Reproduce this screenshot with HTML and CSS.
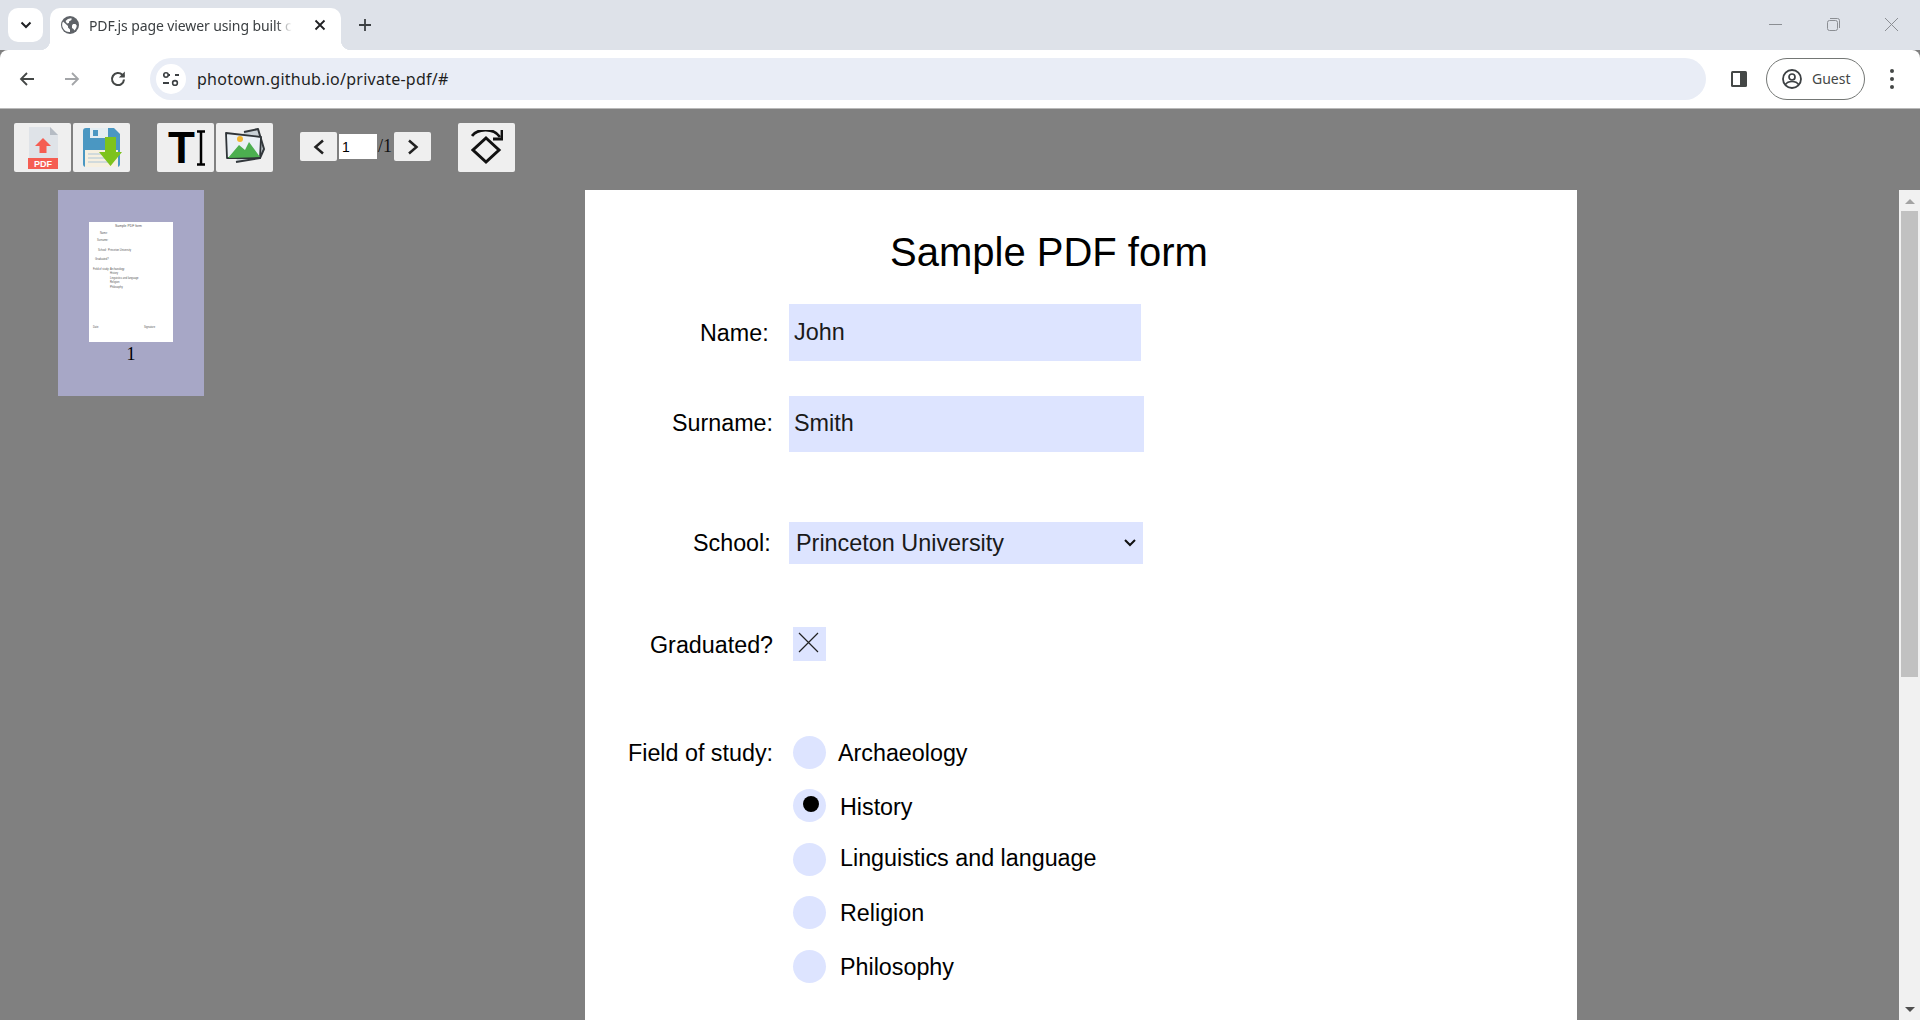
FILE: index.html
```html
<!DOCTYPE html>
<html lang="en">
<head>
    <meta charset="UTF-8">
    <title>PDF.js page viewer using builtCSS</title>
    <link rel="stylesheet" href="styles.css">
</head>
<body>

    <!-- browser chrome -->
    <header class="tabstrip">
        <button class="tab-search">
            <svg width="14" height="14" viewBox="0 0 14 14"><path d="M2.5 4.5 7 9l4.5-4.5" fill="none" stroke="#202124" stroke-width="2"/></svg>
        </button>
        <div class="tab">
            <svg class="favicon" width="18" height="18" viewBox="0 0 18 18">
                <circle cx="9" cy="9" r="9" fill="#5f6368"/>
                <path d="M2 5.5 7 10v1.5l2 2V16a7.2 7.2 0 0 1-7-10.500zM10.500 2.200V4L8 5.500V7l-2 .5L4.500 5A7 7 0 0 1 10.500 2.200zM12 8h2.500l1.300 1.800a7 7 0 0 1-2.300 4.700L12.500 13l-1.500-1V9.500z" fill="#fff"/>
            </svg>
            <span class="tab-title">PDF.js page viewer using built c</span>
            <svg class="tab-close" width="12" height="12" viewBox="0 0 12 12"><path d="M1.500 1.500l9 9M10.500 1.500l-9 9" stroke="#202124" stroke-width="1.800"/></svg>
        </div>
        <svg class="new-tab" width="14" height="14" viewBox="0 0 14 14"><path d="M7 1v12M1 7h12" stroke="#3c4043" stroke-width="1.800"/></svg>
        <div class="window-controls">
            <svg width="13" height="13" viewBox="0 0 13 13"><path d="M0 6.500h13" stroke="#8b8e93"/></svg>
            <svg width="13" height="13" viewBox="0 0 13 13"><rect x=".5" y="2.500" width="10" height="10" rx="2" fill="none" stroke="#8b8e93"/><path d="M3 .5h7.500a2 2 0 0 1 2 2V10" fill="none" stroke="#8b8e93"/></svg>
            <svg width="13" height="13" viewBox="0 0 13 13"><path d="M0 0l13 13M13 0 0 13" stroke="#8b8e93"/></svg>
        </div>
    </header>

    <nav class="addressbar">
        <svg class="nav-icon" width="16" height="16" viewBox="0 0 16 16"><path d="M15 8H2M8 2 2 8l6 6" fill="none" stroke="#444746" stroke-width="1.800"/></svg>
        <svg class="nav-icon" width="16" height="16" viewBox="0 0 16 16"><path d="M1 8h13M8 2l6 6-6 6" fill="none" stroke="#a3a5a8" stroke-width="1.800"/></svg>
        <svg class="nav-icon" width="18" height="18" viewBox="0 0 18 18"><path d="M15 9.500A6 6 0 1 1 13.300 4.800L15 6.500" fill="none" stroke="#444746" stroke-width="2.100"/><path d="M15.800 1.500V7.500H9.800z" fill="#444746"/></svg>
        <div class="omnibox">
            <span class="site-info">
                <svg width="16" height="14" viewBox="0 0 16 14">
                    <path d="M0 3h7M0 11h6M12 3h4" stroke="#3c4043" stroke-width="1.800"/>
                    <circle cx="3" cy="3" r="2.200" fill="#fff" stroke="#3c4043" stroke-width="1.600"/>
                    <circle cx="12" cy="11" r="2.400" fill="#fff" stroke="#3c4043" stroke-width="1.600"/>
                </svg>
            </span>
            <span class="url">photown.github.io/private-pdf/#</span>
        </div>
        <svg class="side-panel" width="18" height="18" viewBox="0 0 18 18"><rect x="1" y="1" width="16" height="16" rx="1.500" fill="#444746"/><rect x="3" y="3" width="7" height="12" fill="#fff"/></svg>
        <div class="guest-chip">
            <svg width="20" height="20" viewBox="0 0 20 20">
                <circle cx="10" cy="10" r="9" fill="none" stroke="#3c4043" stroke-width="1.800"/>
                <circle cx="10" cy="8" r="3" fill="none" stroke="#3c4043" stroke-width="1.700"/>
                <path d="M3.500 15.500c1.500-2.500 4-3 6.500-3s5 .5 6.500 3" fill="none" stroke="#3c4043" stroke-width="1.700"/>
            </svg>
            <span>Guest</span>
        </div>
        <div class="menu-dots"><i></i><i></i><i></i></div>
    </nav>

    <!-- the app -->
    <section class="app-toolbar">
        <button class="tool">
            <svg width="34" height="42" viewBox="0 0 34 42">
                <path d="M3 0h21l8 8v32H3z" fill="#dfe3e8"/>
                <path d="M24 0v8h8z" fill="#b6bcc4"/>
                <path d="M17 11l8 8h-4.500v7h-7v-7H9z" fill="#f55d52"/>
                <rect x="2" y="31" width="30" height="11" fill="#f55d52"/>
                <text x="17" y="40" class="pdf-tag">PDF</text>
            </svg>
        </button>
        <button class="tool">
            <svg width="40" height="40" viewBox="0 0 40 40">
                <path d="M1 3a3 3 0 0 1 3-3h28l6 6v30a3 3 0 0 1-3 3H4a3 3 0 0 1-3-3z" fill="#4a97c2"/>
                <rect x="8" y="0" width="18" height="10" fill="#e3edf2"/>
                <rect x="11" y="2" width="5" height="6" fill="#4a97c2"/>
                <rect x="3" y="22" width="33" height="17" fill="#f6efe0"/>
                <path d="M6 26h20M6 30h20M6 34h20" stroke="#c5d3da" stroke-width="1.300"/>
                <path d="M23 9h11v15h6L28.500 38 17 24h6z" fill="#7dc31c"/>
            </svg>
        </button>
        <button class="tool tool-gap tool-text">
            <span class="type-t">T</span>
            <svg width="10" height="36" viewBox="0 0 10 36">
                <path d="M5 1v34M1 1.500h8M1 34.500h8" fill="none" stroke="#000" stroke-width="2.500"/>
            </svg>
        </button>
        <button class="tool">
            <svg width="48" height="40" viewBox="6 5 48 40">
                <path d="M29 9 43 6l6 20-4 9-24 4" fill="#c9d1d6" stroke="#33383c" stroke-width="2" stroke-linejoin="round"/>
                <path d="M11 10 46 14 45 35 12 35z" fill="#eaf0f5" stroke="#2f3438" stroke-width="1.800" stroke-linejoin="round"/>
                <path d="M13 35 24 22l6 5 4-8 11 15z" fill="#4caf50"/>
                <circle cx="25" cy="16" r="3" fill="#f2b632"/>
            </svg>
        </button>
        <div class="pager">
            <button class="page-btn">
                <svg width="14" height="16" viewBox="0 0 14 16"><path d="M11 1.500 3.500 8l7.500 6.500" fill="none" stroke="#222" stroke-width="2.500"/></svg>
            </button>
            <input class="page-input" type="text" value="1">
            <span class="page-total">/1</span>
            <button class="page-btn">
                <svg width="14" height="16" viewBox="0 0 14 16"><path d="M3 1.500 10.500 8 3 14.500" fill="none" stroke="#222" stroke-width="2.500"/></svg>
            </button>
        </div>
        <button class="tool tool-rotate">
            <svg width="32" height="36" viewBox="0 2 32 36">
                <path d="M1 8C6 1 22-1 29 9" fill="none" stroke="#111" stroke-width="2.800"/>
                <path d="M31 2v9h-9" fill="none" stroke="#111" stroke-width="2.800"/>
                <path d="M15 10 28 22 15 34 2 22z" fill="none" stroke="#111" stroke-width="3"/>
            </svg>
        </button>
    </section>

    <main class="workspace">
        <aside class="thumbs">
            <div class="thumb-card">
                <div class="thumb-page">
                    <span class="mini mini-title">Sample PDF form</span>
                    <span class="mini mini-name">Name:</span>
                    <span class="mini mini-surname">Surname:</span>
                    <span class="mini mini-school">School: &nbsp;Princeton University</span>
                    <span class="mini mini-grad">Graduated?</span>
                    <span class="mini mini-field">Field of study:</span>
                    <span class="mini mini-r1">Archaeology</span>
                    <span class="mini mini-r2">History</span>
                    <span class="mini mini-r3">Linguistics and language</span>
                    <span class="mini mini-r4">Religion</span>
                    <span class="mini mini-r5">Philosophy</span>
                    <span class="mini mini-date">Date</span>
                    <span class="mini mini-sign">Signature</span>
                </div>
                <span class="thumb-num">1</span>
            </div>
        </aside>

        <!-- pdf page is a free canvas, fields sit where the pdf puts them -->
        <article class="pdf-page">
            <h1 class="pdf-title">Sample PDF form</h1>

            <label class="pdf-label lbl-name">Name:</label>
            <input class="pdf-field field-name" type="text" value="John">

            <label class="pdf-label lbl-surname">Surname:</label>
            <input class="pdf-field field-surname" type="text" value="Smith">

            <label class="pdf-label lbl-school">School:</label>
            <select class="pdf-field field-school">
                <option>Princeton University</option>
            </select>

            <label class="pdf-label lbl-grad">Graduated?</label>
            <div class="field-check">
                <svg width="24" height="24" viewBox="0 0 24 24"><path d="M3 3l19 19M22 3 3 22" stroke="#222" stroke-width="1.200"/></svg>
            </div>

            <label class="pdf-label lbl-field">Field of study:</label>

            <span class="radio radio-1"></span>
            <span class="pdf-label opt-1">Archaeology</span>
            <span class="radio radio-2 checked"></span>
            <span class="pdf-label opt-2">History</span>
            <span class="radio radio-3"></span>
            <span class="pdf-label opt-3">Linguistics and language</span>
            <span class="radio radio-4"></span>
            <span class="pdf-label opt-4">Religion</span>
            <span class="radio radio-5"></span>
            <span class="pdf-label opt-5">Philosophy</span>
        </article>

        <div class="scrollbar">
            <span class="arrow-up"></span>
            <span class="scroll-thumb"></span>
            <span class="arrow-down"></span>
        </div>
    </main>

</body>
</html>
```

FILE: styles.css
```css
* {
    box-sizing: border-box;
}

html, body {
    height: 100%;
}

body {
    margin: 0;
    display: flex;
    flex-direction: column;
    overflow: hidden;
    background-color: #808080;
    font-family: "Liberation Sans", Arial, sans-serif;
}

button {
    padding: 0;
    border: none;
    font: inherit;
}

/* ---- browser tabs ---- */

.tabstrip {
    height: 50px;
    flex: none;
    display: flex;
    align-items: flex-start;
    padding: 8px 0 0 8px;
    background-color: #dee2e9;
}

.tab-search {
    width: 35px;
    height: 34px;
    display: flex;
    align-items: center;
    justify-content: center;
    background-color: #fff;
    border-radius: 10px;
}

.tab {
    position: relative;
    width: 291px;
    height: 42px;
    margin-left: 7px;
    display: flex;
    align-items: center;
    padding: 0 0 8px 11px;
    background-color: #fff;
    border-radius: 10px 10px 0 0;
    margin-bottom: -1px;
}

.tab::before,
.tab::after {
    content: "";
    position: absolute;
    bottom: 0;
    width: 10px;
    height: 10px;
}

.tab::before {
    left: -10px;
    background: radial-gradient(circle at 0 0, transparent 10px, #fff 10.500px);
}

.tab::after {
    right: -10px;
    background: radial-gradient(circle at 100% 0, transparent 10px, #fff 10.500px);
}

.favicon {
    flex: none;
}

.tab-title {
    margin-left: 10px;
    white-space: nowrap;
    font-family: "Noto Sans", sans-serif;
    font-size: 14px;
    letter-spacing: -0.1px;
    color: #3c4043;
    -webkit-mask-image: linear-gradient(to right, #000 92%, transparent);
    mask-image: linear-gradient(to right, #000 92%, transparent);
}

.tab-close {
    position: absolute;
    right: 15px;
    top: 11px;
}

.new-tab {
    margin: 10px 0 0 17px;
}

.window-controls {
    margin-left: auto;
    display: flex;
    gap: 45px;
    padding: 10px 22px 0 0;
}

/* ---- address bar ---- */

.addressbar {
    height: 59px;
    flex: none;
    display: flex;
    align-items: center;
    padding: 0 0 1px 19px;
    background-color: #fff;
    border-bottom: 1px solid #b9b9b9;
    border-radius: 8px 8px 0 0;
}

.nav-icon {
    flex: none;
    margin-right: 29px;
}

.nav-icon:nth-child(3) {
    margin-right: 23px;
}

.omnibox {
    width: 1556px;
    height: 42px;
    flex: none;
    display: flex;
    align-items: center;
    padding-left: 6px;
    background-color: #e9edf6;
    border-radius: 21px;
}

.site-info {
    width: 30px;
    height: 30px;
    display: flex;
    align-items: center;
    justify-content: center;
    background-color: #fff;
    border-radius: 50%;
}

.url {
    margin-left: 11px;
    font-family: "Noto Sans", sans-serif;
    font-size: 16px;
    letter-spacing: 0.25px;
    color: #1f1f1f;
}

.side-panel {
    margin-left: 24px;
}

.guest-chip {
    width: 99px;
    height: 42px;
    margin-left: 18px;
    display: flex;
    align-items: center;
    gap: 10px;
    padding-left: 15px;
    border: 1px solid #747775;
    border-radius: 21px;
    font-family: "Noto Sans", sans-serif;
    font-size: 14px;
    color: #444746;
}

.menu-dots {
    margin-left: 25px;
    display: flex;
    flex-direction: column;
    gap: 4px;
}

.menu-dots i {
    width: 4px;
    height: 4px;
    background-color: #444746;
    border-radius: 50%;
}

/* ---- app toolbar ---- */

.app-toolbar {
    height: 81px;
    flex: none;
    display: flex;
    align-items: flex-start;
    gap: 2px;
    padding: 14px 0 0 14px;
}

.tool {
    width: 57px;
    height: 49px;
    display: flex;
    align-items: center;
    justify-content: center;
    background-color: #efefef;
    border-radius: 2px;
}

.tool-gap {
    margin-left: 25px;
}

.tool-rotate {
    margin-left: 25px;
}

.tool-text {
    gap: 1px;
    padding-left: 3px;
}

.pdf-tag {
    font-family: "Liberation Sans", sans-serif;
    font-size: 9px;
    font-weight: 700;
    text-anchor: middle;
    fill: #fff;
}

.type-t {
    font-family: "Liberation Sans", sans-serif;
    font-size: 44px;
    font-weight: 700;
    line-height: 44px;
    color: #000;
}

.pager {
    margin: 9px 0 0 25px;
    display: flex;
    align-items: center;
}

.page-btn {
    width: 37px;
    height: 29px;
    display: flex;
    align-items: center;
    justify-content: center;
    background-color: #efefef;
    border-radius: 2px;
}

.page-input {
    width: 38px;
    height: 25px;
    margin-left: 2px;
    padding: 0 3px;
    border: none;
    outline: none;
    font-family: "Liberation Sans", sans-serif;
    font-size: 14px;
    background-color: #fff;
}

.page-total {
    width: 17px;
    padding-left: 1px;
    font-family: "Liberation Serif", serif;
    font-size: 18px;
    color: #111;
}

/* ---- thumbnails and page ---- */

.workspace {
    flex: 1;
    min-height: 0;
    display: flex;
    overflow: hidden;
}

.thumbs {
    width: 585px;
    flex: none;
    padding-left: 58px;
}

.thumb-card {
    width: 146px;
    height: 206px;
    display: flex;
    flex-direction: column;
    align-items: center;
    padding-top: 32px;
    background-color: #a7a7c6;
}

.thumb-page {
    position: relative;
    width: 84px;
    height: 120px;
    flex: none;
    background-color: #fff;
}

.thumb-num {
    margin-top: 2px;
    font-family: "Liberation Serif", serif;
    font-size: 18px;
    color: #000;
}

.mini {
    position: absolute;
    font-size: 2.600px;
    line-height: 3px;
    white-space: nowrap;
    color: #555;
}

.mini-title { left: 26px; top: 3px; font-size: 3.400px; }
.mini-name { left: 11px; top: 10px; }
.mini-surname { left: 8px; top: 17px; }
.mini-school { left: 9px; top: 27px; }
.mini-grad { left: 6px; top: 36px; }
.mini-field { left: 4px; top: 46px; }
.mini-r1 { left: 21px; top: 46px; }
.mini-r2 { left: 21px; top: 50px; }
.mini-r3 { left: 21px; top: 55px; }
.mini-r4 { left: 21px; top: 59px; }
.mini-r5 { left: 21px; top: 64px; }
.mini-date { left: 4px; top: 104px; }
.mini-sign { left: 55px; top: 104px; }

.pdf-page {
    position: relative;
    width: 992px;
    height: 1284px;
    flex: none;
    background-color: #fff;
}

.pdf-title {
    position: absolute;
    left: 305px;
    top: 34px;
    margin: 0;
    font-size: 40px;
    font-weight: 400;
    line-height: 56px;
    white-space: nowrap;
}

.pdf-label {
    position: absolute;
    font-size: 23.300px;
    line-height: 30px;
    white-space: nowrap;
    color: #000;
}

.lbl-name { left: 115px; top: 128px; }
.lbl-surname { left: 87px; top: 218px; }
.lbl-school { left: 108px; top: 338px; }
.lbl-grad { left: 65px; top: 440px; }
.lbl-field { left: 43px; top: 548px; }

.opt-1 { left: 253px; top: 548px; }
.opt-2 { left: 255px; top: 602px; }
.opt-3 { left: 255px; top: 653px; }
.opt-4 { left: 255px; top: 708px; }
.opt-5 { left: 255px; top: 762px; }

.pdf-field {
    position: absolute;
    left: 204px;
    margin: 0;
    border: none;
    border-radius: 0;
    outline: none;
    font-family: "Liberation Sans", sans-serif;
    font-size: 23.400px;
    color: #1a1a1a;
    background-color: #dde4ff;
}

.field-name { top: 114px; width: 352px; height: 57px; padding: 0 5px; }
.field-surname { top: 206px; width: 355px; height: 56px; padding: 0 5px 1px; }

.field-school {
    top: 332px;
    width: 354px;
    height: 42px;
    padding: 0 7px;
    appearance: none;
    background-image: url("data:image/svg+xml,%3Csvg xmlns='http://www.w3.org/2000/svg' width='12' height='8'%3E%3Cpath d='M1 1l5 5 5-5' fill='none' stroke='%23111' stroke-width='2'/%3E%3C/svg%3E");
    background-repeat: no-repeat;
    background-position: right 7px center;
}

.field-check {
    position: absolute;
    left: 208px;
    top: 437px;
    width: 33px;
    height: 34px;
    padding: 3px 0 0 3px;
    background-color: #dde4ff;
}

.radio {
    position: absolute;
    left: 208px;
    width: 33px;
    height: 33px;
    background-color: #dde4ff;
    border-radius: 50%;
}

.radio-1 { top: 546px; }
.radio-2 { top: 599px; }
.radio-3 { top: 653px; }
.radio-4 { top: 706px; }
.radio-5 { top: 760px; }

.radio.checked::after {
    content: "";
    position: absolute;
    left: 10px;
    top: 7px;
    width: 16px;
    height: 16px;
    background-color: #000;
    border-radius: 50%;
}

/* ---- scrollbar ---- */

.scrollbar {
    width: 21px;
    flex: none;
    margin-left: auto;
    display: flex;
    flex-direction: column;
    align-items: center;
    padding-top: 9px;
    background-color: #f1f1f1;
}

.arrow-up,
.arrow-down {
    width: 0;
    height: 0;
    border-left: 5px solid transparent;
    border-right: 5px solid transparent;
}

.arrow-up {
    border-bottom: 5px solid #a3a3a3;
}

.arrow-down {
    margin-top: auto;
    margin-bottom: 8px;
    border-top: 5px solid #505050;
}

.scroll-thumb {
    width: 17px;
    height: 466px;
    margin-top: 7px;
    background-color: #c1c1c1;
}
```
